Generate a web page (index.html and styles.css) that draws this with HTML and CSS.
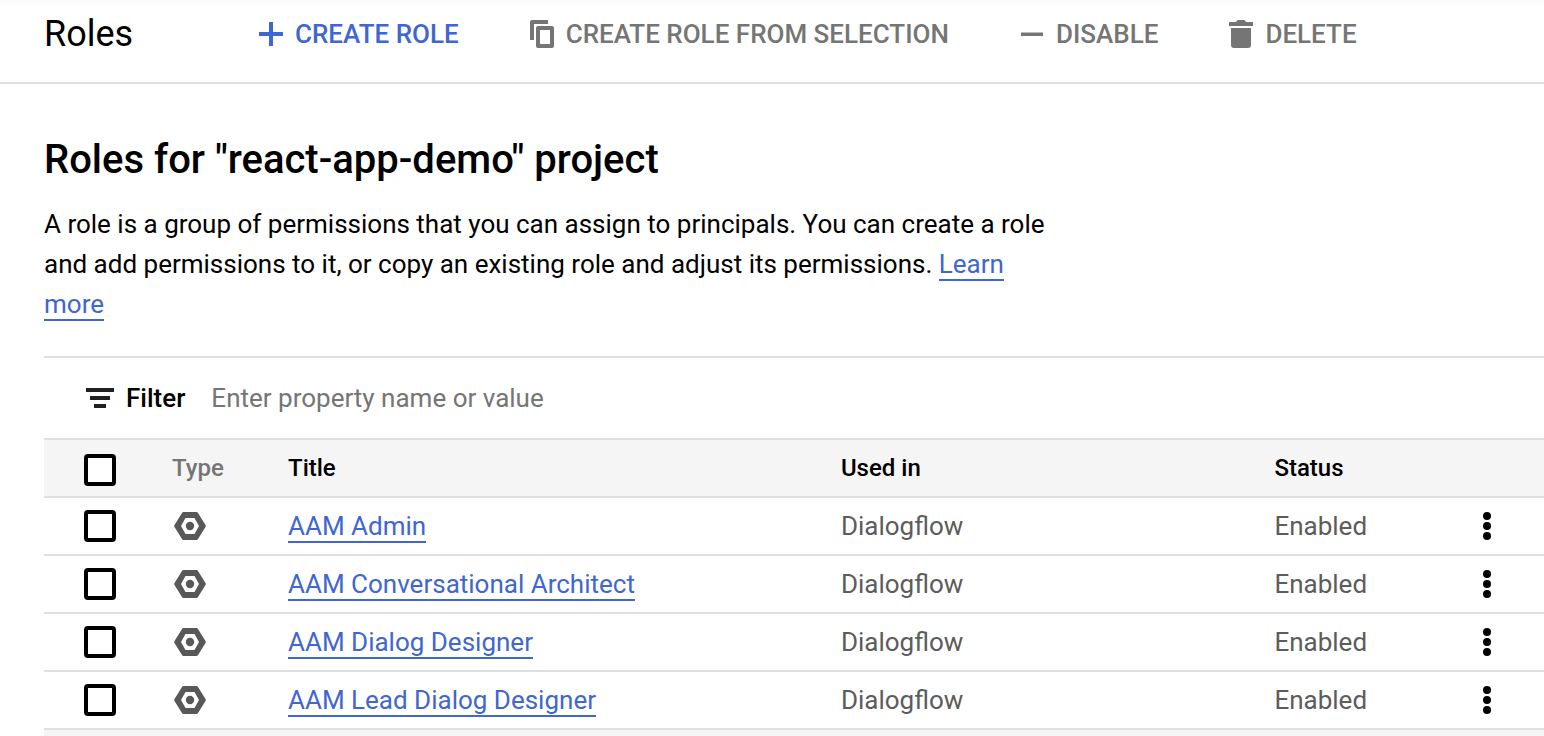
FILE: index.html
```html
<!DOCTYPE html>
<html lang="en">
<head>
<meta charset="utf-8">
<meta name="viewport" content="width=device-width, initial-scale=1">
<title>Roles</title>
<link rel="stylesheet" href="styles.css">
</head>
<body>
<svg class="sprite" aria-hidden="true">
  <symbol id="role-icon" viewBox="0 0 32 28">
    <path fill-rule="evenodd" d="M9.500 0h13q1 0 1.500.9l7.500 12.100q.6 1 0 2L24 27.100q-.5.900-1.500.900h-13q-1 0-1.500-.900L.5 15q-.6-1 0-2L8 .9Q8.500 0 9.500 0zM11.500 6 7 14l4.500 8h9l4.500-8-4.500-8z"/>
    <circle cx="16" cy="14" r="4.200"/>
  </symbol>
  <symbol id="more-icon" viewBox="0 0 8 28">
    <circle cx="4" cy="4" r="4"/><circle cx="4" cy="14" r="4"/><circle cx="4" cy="24" r="4"/>
  </symbol>
</svg>
<header class="toolbar">
  <h1 class="toolbar-title">Roles</h1>
  <nav class="actions" aria-label="Role actions">
    <button class="action action-primary" type="button">
      <svg width="24" height="28" viewBox="0 0 24 28" aria-hidden="true"><path d="M10 2h4v10h10v4H14v10h-4V16H0v-4h10z"/></svg>
      CREATE ROLE
    </button>
    <button class="action" type="button">
      <svg width="24" height="28" viewBox="0 0 24 28" aria-hidden="true"><path fill-rule="evenodd" d="M2 0h16v4H4v16H0V2q0-2 2-2zM8 6h14q2 0 2 2v18q0 2-2 2H8q-2 0-2-2V8q0-2 2-2zm2 4v14h10V10z"/></svg>
      CREATE ROLE FROM SELECTION
    </button>
    <button class="action" type="button">
      <svg width="24" height="28" viewBox="0 0 24 28" aria-hidden="true"><path d="M1 12.500h22v3.500H1z"/></svg>
      DISABLE
    </button>
    <button class="action" type="button">
      <svg width="24" height="28" viewBox="0 0 24 28" aria-hidden="true"><path d="M0 2h7l1.500-2h7L17 2h7v4H0zM2 8h20v17q0 3-3 3H5q-3 0-3-3z"/></svg>
      DELETE
    </button>
  </nav>
</header>
<main class="content">
  <h2 class="heading">Roles for "react-app-demo" project</h2>
  <p class="description">A role is a group of permissions that you can assign to principals. You can create a role and add permissions to it, or copy an existing role and adjust its permissions. <a class="link" href="#">Learn more</a></p>
  <div class="filter">
    <label class="filter-label" for="filter">
      <svg width="28" height="20" viewBox="0 0 28 20" aria-hidden="true"><path d="M0 0h28v4H0zM4 8h20v4H4zM8 16h12v4H8z"/></svg>
      Filter
    </label>
    <input class="filter-input" id="filter" type="text" placeholder="Enter property name or value">
  </div>
  <table class="roles">
    <colgroup><col class="col-check"><col class="col-type"><col class="col-title"><col class="col-used"><col><col class="col-menu"></colgroup>
    <thead>
      <tr>
        <th class="check-cell"><input class="check" type="checkbox" aria-label="Select all roles"></th>
        <th class="muted">Type</th><th>Title</th><th>Used in</th><th>Status</th><td></td>
      </tr>
    </thead>
    <tbody>
      <tr>
        <td class="check-cell"><input class="check" type="checkbox" aria-label="Select AAM Admin"></td>
        <td><svg class="role-icon" role="img" aria-label="Role"><use href="#role-icon"/></svg></td>
        <td><a class="link" href="#">AAM Admin</a></td><td>Dialogflow</td><td>Enabled</td>
        <td class="menu-cell"><button class="menu" type="button" aria-label="Actions for AAM Admin"><svg class="more-icon"><use href="#more-icon"/></svg></button></td>
      </tr>
      <tr>
        <td class="check-cell"><input class="check" type="checkbox" aria-label="Select AAM Conversational Architect"></td>
        <td><svg class="role-icon" role="img" aria-label="Role"><use href="#role-icon"/></svg></td>
        <td><a class="link" href="#">AAM Conversational Architect</a></td><td>Dialogflow</td><td>Enabled</td>
        <td class="menu-cell"><button class="menu" type="button" aria-label="Actions for AAM Conversational Architect"><svg class="more-icon"><use href="#more-icon"/></svg></button></td>
      </tr>
      <tr>
        <td class="check-cell"><input class="check" type="checkbox" aria-label="Select AAM Dialog Designer"></td>
        <td><svg class="role-icon" role="img" aria-label="Role"><use href="#role-icon"/></svg></td>
        <td><a class="link" href="#">AAM Dialog Designer</a></td><td>Dialogflow</td><td>Enabled</td>
        <td class="menu-cell"><button class="menu" type="button" aria-label="Actions for AAM Dialog Designer"><svg class="more-icon"><use href="#more-icon"/></svg></button></td>
      </tr>
      <tr>
        <td class="check-cell"><input class="check" type="checkbox" aria-label="Select AAM Lead Dialog Designer"></td>
        <td><svg class="role-icon" role="img" aria-label="Role"><use href="#role-icon"/></svg></td>
        <td><a class="link" href="#">AAM Lead Dialog Designer</a></td><td>Dialogflow</td><td>Enabled</td>
        <td class="menu-cell"><button class="menu" type="button" aria-label="Actions for AAM Lead Dialog Designer"><svg class="more-icon"><use href="#more-icon"/></svg></button></td>
      </tr>
    </tbody>
  </table>
  <div class="table-end"></div>
</main>
</body>
</html>
```
FILE: styles.css
```css
* { box-sizing: border-box; }

body {
  display: flex;
  flex-direction: column;
  min-height: 100vh;
  margin: 0;
  background: #fff;
  color: #000;
  font: 400 26px/40px Roboto, "Liberation Sans", sans-serif;
}

button, input { font: inherit; }

.sprite { position: absolute; width: 0; height: 0; }

.toolbar {
  display: flex;
  align-items: center;
  padding: 12px 44px 26px;
  border-bottom: 2px solid #e0e0e0;
  background: linear-gradient(#fafafa, #fff 6px);
}

.toolbar-title {
  width: 215px;
  margin: 0;
  font-size: 36px;
  line-height: 44px;
  font-weight: 400;
}

.actions { display: flex; gap: 71px; }

.action {
  display: flex;
  align-items: center;
  gap: 12px;
  padding: 0;
  border: 0;
  background: none;
  color: #757575;
  fill: currentColor;
  font-weight: 500;
  white-space: nowrap;
}

.action-primary { color: #3f66d1; }

.content {
  display: flex;
  flex: 1;
  flex-direction: column;
  padding: 52px 0 0 44px;
}

.heading {
  margin: 0;
  font-size: 40px;
  line-height: 48px;
  font-weight: 500;
}

.description {
  max-width: 1004px;
  margin: 20px 0 32px;
}

.link {
  border-bottom: 2px solid #3f66d1;
  color: #3f66d1;
  text-decoration: none;
}

.filter {
  display: flex;
  align-items: center;
  gap: 26px;
  height: 82px;
  padding-left: 42px;
  border-top: 2px solid #e0e0e0;
}

.filter-label {
  display: flex;
  align-items: center;
  gap: 12px;
  font-weight: 500;
}

.filter-label svg { fill: #212121; }

.filter-input {
  flex: 1;
  min-width: 0;
  padding: 0;
  border: 0;
  outline: 0;
  background: none;
}

.filter-input::placeholder { color: #757575; opacity: 1; }

.roles {
  width: 100%;
  border-spacing: 0;
  border-top: 2px solid #e0e0e0;
  table-layout: fixed;
}

.col-check, .col-type { width: 116px; }
.col-title { width: 36.86%; }
.col-used { width: 28.9%; }
.col-menu { width: 114px; }

.roles th, .roles td {
  height: 58px;
  padding: 0 0 0 12px;
  border-bottom: 2px solid #e0e0e0;
  text-align: left;
  vertical-align: middle;
}

.roles th { font-size: 24px; font-weight: 500; }
.roles thead { background: #f5f5f5; }
.roles tbody { color: #5c5c5c; }
.roles .muted { color: #757575; }
.roles .check-cell { padding-left: 40px; }
.roles th.check-cell { padding-top: 4px; }
.roles .menu-cell { padding: 0; }

.check {
  display: block;
  width: 32px;
  height: 32px;
  margin: 0;
  border: 4px solid #000;
  border-radius: 4px;
  background: #fff;
  appearance: none;
}

.check:checked { background: #3f66d1; }

.role-icon {
  display: block;
  width: 32px;
  height: 28px;
  margin-left: 2px;
  fill: #585858;
}

.menu {
  display: block;
  margin: 0 auto;
  padding: 4px 12px;
  border: 0;
  background: none;
}

.more-icon { display: block; width: 8px; height: 28px; }

.table-end { flex: 1; background: #f5f5f5; }
```
